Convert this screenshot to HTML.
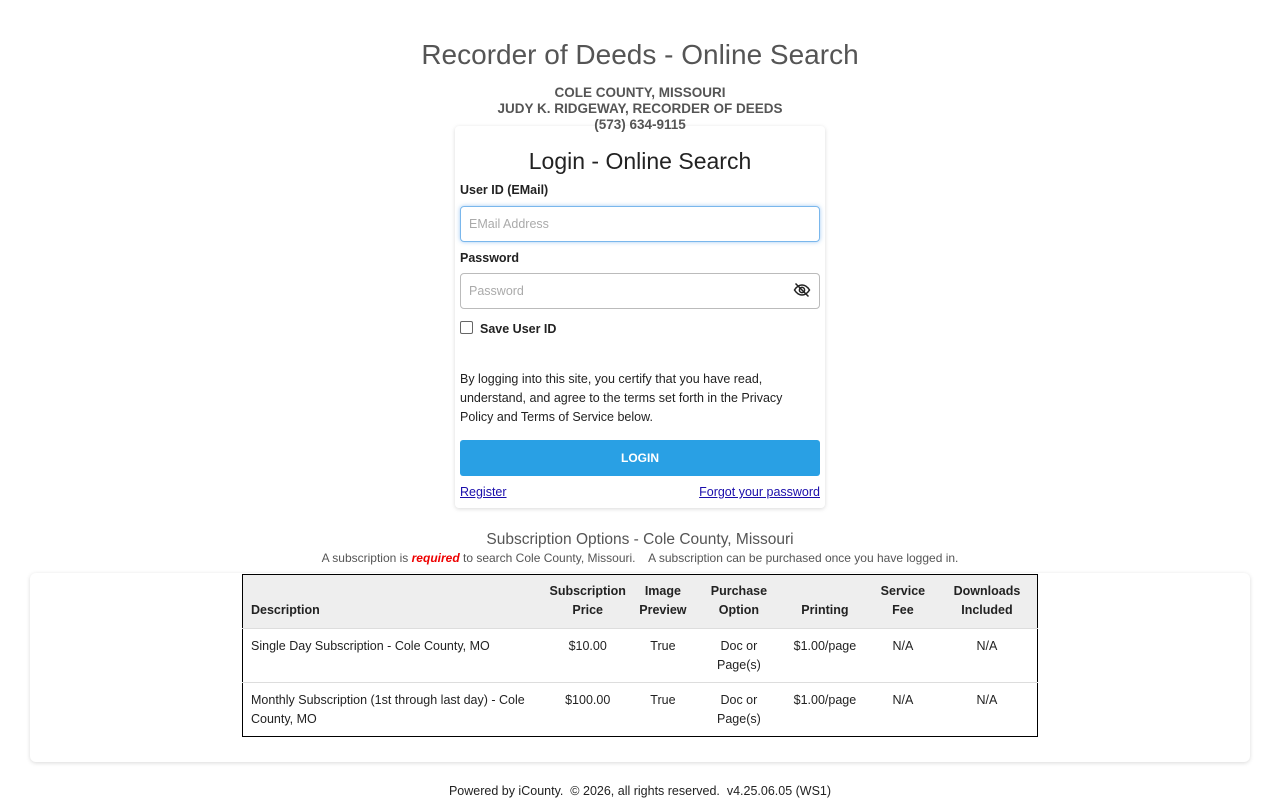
<!DOCTYPE html>
<html><head><meta charset="utf-8"><style>
*{box-sizing:border-box;margin:0;padding:0}
body{width:1280px;height:800px;background:#fff;font-family:"Liberation Sans",sans-serif;color:#222;position:relative;overflow:hidden}
.a{position:absolute}
.c{text-align:center}
h1{position:absolute;left:0;width:1280px;top:39px;text-align:center;font-weight:400;font-size:28px;color:#555}
.hd{left:0;width:1280px;top:85px;text-align:center;font-weight:bold;font-size:13.5px;color:#555;line-height:16px;z-index:2}
.card{left:455px;top:126px;width:370px;height:382px;background:#fff;border-radius:4px;box-shadow:0 1px 4px rgba(0,0,0,.15)}
.lbl{font-weight:bold;font-size:12.5px;color:#222}
.inp{left:460px;width:360px;height:36px;border:1px solid #bbb;border-radius:4px;font-size:12.5px;color:#aaa;padding:10px 8px}
.outer{left:30px;top:573px;width:1220px;height:189px;border-radius:6px;box-shadow:0 1px 4px rgba(0,0,0,.15);background:#fff}
table{position:absolute;left:242px;top:574px;width:796px;border-collapse:collapse;border:1px solid #000;font-size:12.5px}
th{background:#eee;font-weight:bold;height:54px;vertical-align:bottom;padding:0 3px 8px;line-height:19px;text-align:center}
td{height:54px;vertical-align:top;padding:8px 3px 0;line-height:19px;text-align:center;border-top:1px solid #ddd}
th:first-child,td:first-child{text-align:left;padding-left:8px}
a{color:#1a0dab;text-decoration:underline}
</style></head><body>
<h1>Recorder of Deeds - Online Search</h1>
<div class="a hd">COLE COUNTY, MISSOURI<br>JUDY K. RIDGEWAY, RECORDER OF DEEDS<br>(573) 634-9115</div>
<div class="a card"></div>
<div class="a c" style="left:455px;width:370px;top:148px;font-size:23px;color:#222">Login - Online Search</div>
<div class="a lbl" style="left:460px;top:183px">User ID (EMail)</div>
<div class="a inp" style="top:206px;border-color:#7ab7ec;box-shadow:0 0 4px rgba(70,150,230,.5)">EMail Address</div>
<div class="a lbl" style="left:460px;top:251px">Password</div>
<div class="a inp" style="top:273px">Password</div>
<svg class="a" style="left:793px;top:282px" width="18" height="16" viewBox="0 0 18 16" fill="none" stroke="#222" stroke-width="1.5"><path d="M1.5 8C4 4 6.5 3 9 3s5 1 7.5 5c-2.5 4-5 5-7.5 5s-5-1-7.5-5z"/><circle cx="9" cy="8" r="2.6"/><path d="M2.5 1.5l13 13"/></svg>
<div class="a" style="left:460px;top:321px;width:13px;height:13px;border:1px solid #666;border-radius:2px"></div>
<div class="a lbl" style="left:480px;top:322px">Save User ID</div>
<div class="a" style="left:460px;top:370px;width:345px;font-size:12.5px;line-height:19px;color:#222">By logging into this site, you certify that you have read, understand, and agree to the terms set forth in the Privacy Policy and Terms of Service below.</div>
<div class="a c" style="left:460px;top:440px;width:360px;height:36px;background:#29a0e4;border-radius:3px;color:#fff;font-weight:bold;font-size:12px;line-height:36px">LOGIN</div>
<a class="a" style="left:460px;top:485px;font-size:12.5px">Register</a>
<a class="a" style="right:460px;top:485px;font-size:12.5px">Forgot your password</a>
<div class="a c" style="left:0;width:1280px;top:531px;font-size:15.5px;color:#555">Subscription Options - Cole County, Missouri</div>
<div class="a c" style="left:0;width:1280px;top:551px;font-size:12px;color:#555">A subscription is <b><i style="color:#e00">required</i></b> to search Cole County, Missouri. &nbsp;&nbsp; A subscription can be purchased once you have logged in.</div>
<div class="a outer"></div>
<table>
<tr><th style="width:304px">Description</th><th style="width:80px">Subscription<br>Price</th><th style="width:68px">Image<br>Preview</th><th style="width:84px">Purchase<br>Option</th><th style="width:88px">Printing</th><th style="width:68px">Service<br>Fee</th><th>Downloads<br>Included</th></tr>
<tr><td>Single Day Subscription - Cole County, MO</td><td>$10.00</td><td>True</td><td>Doc or<br>Page(s)</td><td>$1.00/page</td><td>N/A</td><td>N/A</td></tr>
<tr><td>Monthly Subscription (1st through last day) - Cole County, MO</td><td>$100.00</td><td>True</td><td>Doc or<br>Page(s)</td><td>$1.00/page</td><td>N/A</td><td>N/A</td></tr>
</table>
<div class="a c" style="left:0;width:1280px;top:784px;font-size:12.5px;color:#222">Powered by iCounty. &nbsp;© 2026, all rights reserved. &nbsp;v4.25.06.05 (WS1)</div>
</body></html>
